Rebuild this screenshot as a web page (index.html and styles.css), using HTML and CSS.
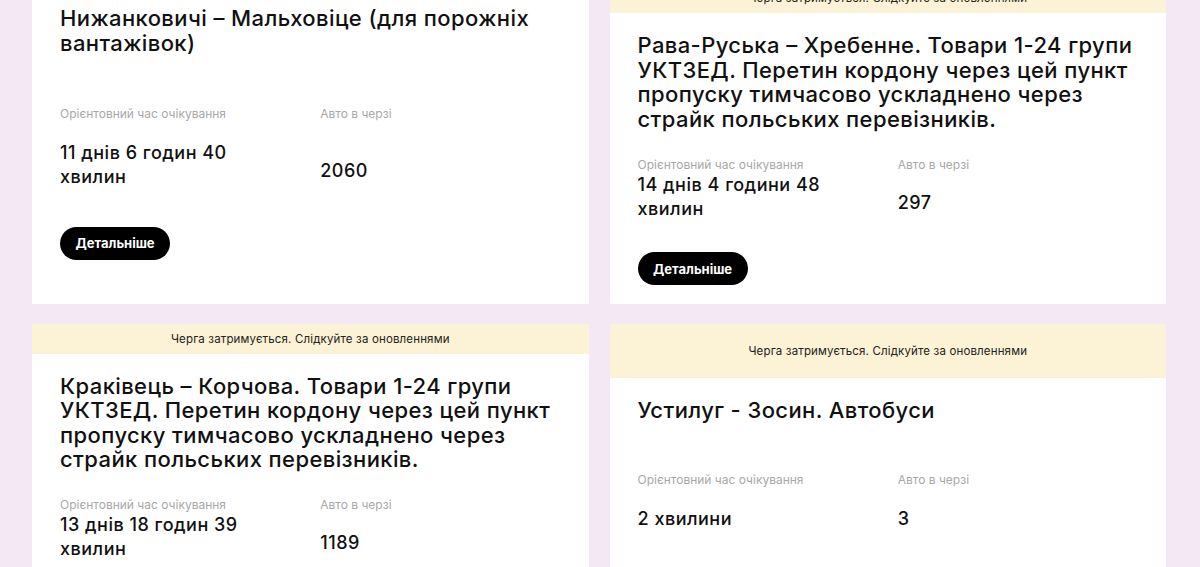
FILE: index.html
```html
<!DOCTYPE html>
<html lang="uk">
<head>
<meta charset="utf-8">
<title>Черги на кордоні</title>
<link rel="stylesheet" href="styles.css">
</head>
<body>
<main class="grid">
  <article class="card">
    <h3 class="card__title">Нижанковичі – Мальховіце (для порожніх вантажівок)</h3>
    <div class="info">
      <div class="info__label">Орієнтовний час очікування</div>
      <div class="info__label">Авто в черзі</div>
      <div class="info__value">11 днів 6 годин 40 хвилин</div>
      <div class="info__value info__value--shift">2060</div>
    </div>
    <div class="card__action"><a class="btn" href="#">Детальніше</a></div>
  </article>

  <article class="card">
    <div class="card__notice">Черга затримується. Слідкуйте за оновленнями</div>
    <h3 class="card__title">Рава-Руська – Хребенне. Товари 1-24 групи УКТЗЕД. Перетин кордону через цей пункт пропуску тимчасово ускладнено через страйк польських перевізників.</h3>
    <div class="info">
      <div class="info__label">Орієнтовний час очікування</div>
      <div class="info__label">Авто в черзі</div>
      <div class="info__value">14 днів 4 години 48 хвилин</div>
      <div class="info__value info__value--shift">297</div>
    </div>
    <div class="card__action"><a class="btn" href="#">Детальніше</a></div>
  </article>

  <article class="card">
    <div class="card__notice">Черга затримується. Слідкуйте за оновленнями</div>
    <h3 class="card__title">Краківець – Корчова. Товари 1-24 групи УКТЗЕД. Перетин кордону через цей пункт пропуску тимчасово ускладнено через страйк польських перевізників.</h3>
    <div class="info">
      <div class="info__label">Орієнтовний час очікування</div>
      <div class="info__label">Авто в черзі</div>
      <div class="info__value">13 днів 18 годин 39 хвилин</div>
      <div class="info__value info__value--shift">1189</div>
    </div>
    <div class="card__action"><a class="btn" href="#">Детальніше</a></div>
  </article>

  <article class="card">
    <div class="card__notice">Черга затримується. Слідкуйте за оновленнями</div>
    <h3 class="card__title">Устилуг - Зосин. Автобуси</h3>
    <div class="info">
      <div class="info__label">Орієнтовний час очікування</div>
      <div class="info__label">Авто в черзі</div>
      <div class="info__value">2 хвилини</div>
      <div class="info__value">3</div>
    </div>
    <div class="card__action"><a class="btn" href="#">Детальніше</a></div>
  </article>
</main>
</body>
</html>
```
FILE: styles.css
```css
html, body {
  margin: 0;
  padding: 0;
}

body {
  background: #f3e8f3;
  font-family: Inter, "Noto Sans", "Liberation Sans", sans-serif;
  color: #111;
  overflow: hidden;
}

.grid {
  display: grid;
  grid-template-columns: 1fr 1fr;
  column-gap: 21px;
  row-gap: 20px;
  padding: 0 34px 0 32px;
  margin-top: -17px;
}

.card {
  background: #fff;
  display: grid;
  grid-template-columns: minmax(0, 1fr);
}

.card__notice {
  min-height: 30px;
  background: #fcf2d6;
  display: flex;
  align-items: center;
  justify-content: center;
  font-size: 11.5px;
  letter-spacing: 0.15px;
  color: #222;
}

.card__title {
  margin: 0;
  padding: 20px 28px 24px;
  font-size: 22px;
  line-height: 24.64px;
  font-weight: 500;
  letter-spacing: 0.4px;
  color: #111;
}

.card__title:first-child {
  padding-top: 23px;
}

.info {
  display: grid;
  grid-template-columns: 1fr 1fr;
  column-gap: 20px;
  align-items: start;
  padding: 0 28px 31.5px;
}

.info__label {
  font-size: 12px;
  line-height: 17px;
  color: #a8a8a8;
}

.info__value {
  align-self: center;
  font-size: 18px;
  line-height: 24px;
  font-weight: 500;
  letter-spacing: 0.5px;
  max-width: 210px;
  color: #111;
}

.info__value--shift {
  margin-top: 12px;
}

.card__action {
  padding: 0 28px 18.5px;
}

.btn {
  display: inline-flex;
  align-items: center;
  height: 33px;
  padding: 0 15.5px;
  border-radius: 17px;
  background: #000;
  color: #fff;
  font-size: 13px;
  font-weight: 700;
  text-decoration: none;
}
```
